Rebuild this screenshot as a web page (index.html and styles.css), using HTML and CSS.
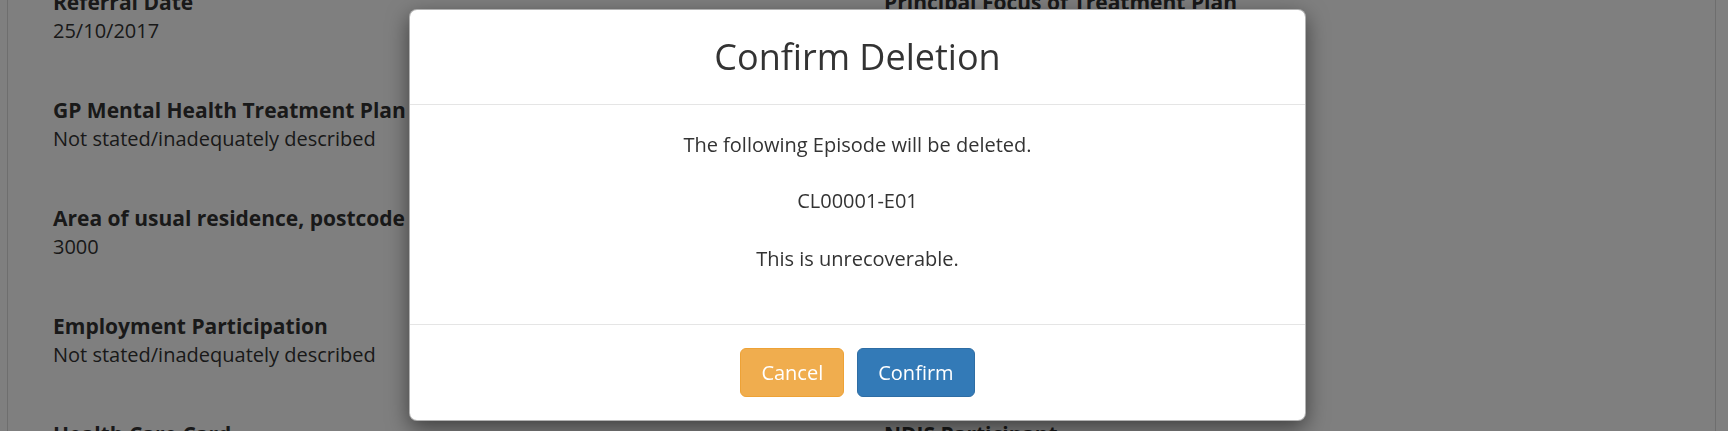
FILE: index.html
```html
<!DOCTYPE html>
<html lang="en">
<head>
<meta charset="utf-8">
<title>Confirm Deletion</title>
<link rel="stylesheet" href="styles.css">
</head>
<body>
<div class="panel">
  <div class="details">
    <div class="col">
      <div class="field"><div class="label">Referral Date</div><div class="value">25/10/2017</div></div>
      <div class="field"><div class="label">GP Mental Health Treatment Plan</div><div class="value">Not stated/inadequately described</div></div>
      <div class="field"><div class="label">Area of usual residence, postcode</div><div class="value">3000</div></div>
      <div class="field"><div class="label">Employment Participation</div><div class="value">Not stated/inadequately described</div></div>
      <div class="field"><div class="label">Health Care Card</div><div class="value">Not stated/inadequately described</div></div>
    </div>
    <div class="col">
      <div class="field"><div class="label">Principal Focus of Treatment Plan</div><div class="value">Psychological therapy</div></div>
      <div class="field"><div class="label">Referrer Profession</div><div class="value">General Practitioner</div></div>
      <div class="field"><div class="label">Referrer Organisation Type</div><div class="value">Private practice</div></div>
      <div class="field"><div class="label">Source of Cash Income</div><div class="value">Not stated/inadequately described</div></div>
      <div class="field"><div class="label">NDIS Participant</div><div class="value">Not stated/inadequately described</div></div>
    </div>
  </div>
</div>

<div class="backdrop"></div>

<div class="modal" role="dialog">
  <div class="modal-header">
    <h2 class="modal-title">Confirm Deletion</h2>
  </div>
  <div class="modal-body">
    <p>The following Episode will be deleted.</p>
    <p>CL00001-E01</p>
    <p>This is unrecoverable.</p>
  </div>
  <div class="modal-footer">
    <button class="btn btn-warning" type="button">Cancel</button>
    <button class="btn btn-primary" type="button">Confirm</button>
  </div>
</div>
</body>
</html>
```

FILE: styles.css
```css
html, body {
  margin: 0;
  padding: 0;
  height: 100%;
  overflow: hidden;
}

body {
  background: #ffffff;
  color: #333333;
  font-family: "Open Sans", "Liberation Sans", Arial, sans-serif;
  font-size: 20px;
  line-height: 28.5px;
}

.panel {
  margin-left: 7px;
  width: 1707px;
  min-height: 100%;
  border-left: 1px solid #dddddd;
  border-right: 1px solid #dddddd;
  box-sizing: content-box;
}

.details {
  display: grid;
  grid-template-columns: 831px 1fr;
  padding-left: 45px;
  margin-top: -12px;
}

.field {
  margin-bottom: 51px;
}

.label {
  font-weight: 700;
  font-size: 21px;
}

.backdrop {
  position: fixed;
  inset: 0;
  background: rgba(0, 0, 0, 0.5);
}

.modal {
  position: absolute;
  left: 409px;
  top: 9px;
  width: 897px;
  box-sizing: border-box;
  background: #ffffff;
  border: 1px solid rgba(0, 0, 0, 0.3);
  border-radius: 8px;
  box-shadow: 0 7px 21px rgba(0, 0, 0, 0.5);
  display: flex;
  flex-direction: column;
}

.modal-header {
  padding: 27px 21px 27px;
  border-bottom: 1px solid #e5e5e5;
  text-align: center;
}

.modal-title {
  margin: 0;
  font-size: 36px;
  font-weight: 400;
  line-height: 40px;
  color: #333333;
}

.modal-body {
  padding: 26px 21px 20.5px;
  text-align: center;
}

.modal-body p {
  margin: 0 0 29.5px;
}

.modal-body p:first-child {
  margin-bottom: 27.5px;
}

.modal-footer {
  border-top: 1px solid #e5e5e5;
  padding: 23px 21px;
  display: flex;
  justify-content: center;
  gap: 13px;
}

.btn {
  font-family: inherit;
  font-size: 20px;
  line-height: 29px;
  padding: 9px 20px;
  border: 1px solid transparent;
  border-radius: 6px;
  color: #ffffff;
  cursor: pointer;
}

.btn-warning {
  background: #f0ad4e;
  border-color: #eea236;
}

.btn-primary {
  background: #337ab7;
  border-color: #2e6da4;
}
```
